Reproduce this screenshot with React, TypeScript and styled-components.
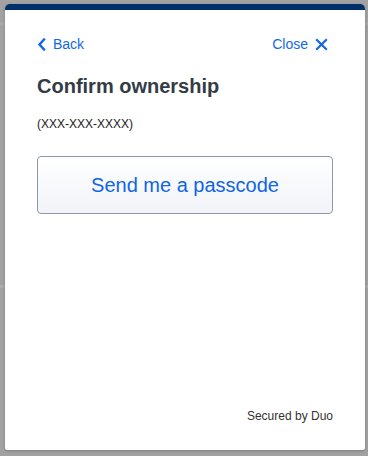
import React from "react";
import styled, { createGlobalStyle } from "styled-components";

const Global = createGlobalStyle`
  html, body { margin: 0; padding: 0; }
  body {
    width: 368px;
    height: 456px;
    overflow: hidden;
    background:
      linear-gradient(#a9a9a9, #a9a9a9) 0 22px / 100% 3px no-repeat,
      linear-gradient(#acacac, #acacac) 0 285px / 100% 3px no-repeat,
      #a2a2a2;
    font-family: "Liberation Sans", Arial, Helvetica, sans-serif;
  }
`;

const Page = styled.div`
  padding: 4px 3px 0 5px;
`;

const Card = styled.div`
  width: 360px;
  height: 446px;
  box-sizing: border-box;
  background: #ffffff;
  border-top: 6px solid #00306a;
  border-radius: 5px 5px 2px 2px;
  box-shadow: 0 1px 3px rgba(0, 0, 0, 0.25);
  padding: 26px 32px 27px;
  display: flex;
  flex-direction: column;
`;

const Nav = styled.div`
  display: flex;
  justify-content: space-between;
  align-items: center;
  height: 16px;
`;

const NavLink = styled.a<{ $trail?: boolean }>`
  display: flex;
  align-items: center;
  gap: ${(p) => (p.$trail ? "7px" : "7px")};
  margin-right: ${(p) => (p.$trail ? "5px" : "0")};
  color: #1267e8;
  font-size: 14px;
  line-height: 16px;
  text-decoration: none;
  cursor: pointer;
`;

const Title = styled.h1`
  margin: 22px 0 0;
  font-size: 20px;
  line-height: 24px;
  font-weight: 700;
  color: #333c46;
`;

const Phone = styled.div`
  margin-top: 19px;
  font-size: 12px;
  line-height: 14px;
  color: #1a1a1a;
`;

const PrimaryButton = styled.button`
  margin-top: 25px;
  height: 58px;
  width: 100%;
  border: 1px solid #8a99ae;
  border-radius: 4px;
  background: linear-gradient(#ffffff, #f1f3f8);
  color: #1064e6;
  font-family: "Liberation Sans", Arial, Helvetica, sans-serif;
  font-size: 20px;
  cursor: pointer;
`;

const Spacer = styled.div`
  flex: 1;
`;

const Footer = styled.div`
  text-align: right;
  font-size: 12px;
  line-height: 14px;
  color: #333;
`;

const Chevron = () => (
  <svg width="9" height="13" viewBox="0 0 9 13">
    <path d="M7 1.5 L2.5 6.5 L7 11.5" fill="none" stroke="#1267e8" strokeWidth="2.4" strokeLinecap="square" strokeLinejoin="miter" />
  </svg>
);

const XIcon = () => (
  <svg width="13" height="13" viewBox="0 0 13 13">
    <path d="M1.2 1.2 L11.8 11.8 M11.8 1.2 L1.2 11.8" fill="none" stroke="#1267e8" strokeWidth="2.2" />
  </svg>
);

export default function App() {
  return (
    <>
      <Global />
      <Page>
        <Card>
          <Nav>
            <NavLink>
              <Chevron />
              Back
            </NavLink>
            <NavLink $trail>
              Close
              <XIcon />
            </NavLink>
          </Nav>
          <Title>Confirm ownership</Title>
          <Phone>(XXX-XXX-XXXX)</Phone>
          <PrimaryButton>Send me a passcode</PrimaryButton>
          <Spacer />
          <Footer>Secured by Duo</Footer>
        </Card>
      </Page>
    </>
  );
}
